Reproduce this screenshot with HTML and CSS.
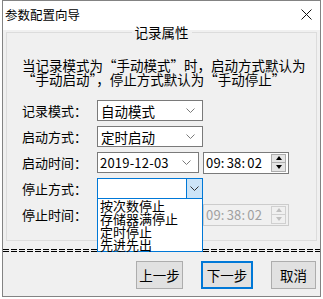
FILE: index.html
```html
<!DOCTYPE html>
<html lang="zh-CN">
<head>
    <meta charset="UTF-8">
    <title>参数配置向导</title>
    <link rel="stylesheet" href="styles.css">
</head>
<body>

<div class="window">
    <div class="titlebar">
        <span class="title">参数配置向导</span>
        <svg class="close" width="11" height="11" viewBox="0 0 11 11">
            <path d="M0.5 0.5L10.5 10.5M10.5 0.5L0.5 10.5" stroke="#111" stroke-width="1"/>
        </svg>
    </div>

    <div class="client">
        <fieldset class="group">
            <legend>记录属性</legend>
            <p class="intro">当记录模式为“手动模式”时，启动方式默认为<br>“手动启动”，停止方式默认为“手动停止”</p>

            <div class="rows">
                <div class="row">
                    <label>记录模式：</label>
                    <div class="combo">
                        <span>自动模式</span>
                        <svg class="chev" width="9" height="5" viewBox="0 0 9 5"><polyline points="0.5,0.5 4.5,4.5 8.5,0.5" fill="none" stroke="#7a7a7a"/></svg>
                    </div>
                </div>
                <div class="row">
                    <label>启动方式：</label>
                    <div class="combo">
                        <span>定时启动</span>
                        <svg class="chev" width="9" height="5" viewBox="0 0 9 5"><polyline points="0.5,0.5 4.5,4.5 8.5,0.5" fill="none" stroke="#7a7a7a"/></svg>
                    </div>
                </div>
                <div class="row">
                    <label>启动时间：</label>
                    <div class="combo date">
                        <span class="num">2019-12-03</span>
                        <svg class="chev" width="9" height="5" viewBox="0 0 9 5"><polyline points="0.5,0.5 4.5,4.5 8.5,0.5" fill="none" stroke="#7a7a7a"/></svg>
                    </div>
                    <div class="time">
                        <span class="num">09<span class="colon">:</span>38<span class="colon">:</span>02</span>
                        <div class="spin">
                            <div class="spin-btn"><span class="arrow-up"></span></div>
                            <div class="spin-btn"><span class="arrow-down"></span></div>
                        </div>
                    </div>
                </div>
                <div class="row">
                    <label>停止方式：</label>
                    <div class="combo focused">
                        <span></span>
                        <div class="drop-btn">
                            <svg width="9" height="5" viewBox="0 0 9 5"><polyline points="0.5,0.5 4.5,4.5 8.5,0.5" fill="none" stroke="#333"/></svg>
                        </div>
                        <ul class="dropdown">
                            <li>按次数停止</li>
                            <li>存储器满停止</li>
                            <li>定时停止</li>
                            <li>先进先出</li>
                        </ul>
                    </div>
                </div>
                <div class="row">
                    <label>停止时间：</label>
                    <div class="combo date">
                        <span class="num">2019-12-03</span>
                    </div>
                    <div class="time disabled">
                        <span class="num">09<span class="colon">:</span>38<span class="colon">:</span>02</span>
                        <div class="spin">
                            <div class="spin-btn"><span class="arrow-up"></span></div>
                            <div class="spin-btn"><span class="arrow-down"></span></div>
                        </div>
                    </div>
                </div>
            </div>
        </fieldset>

        <div class="separator"></div>

        <div class="buttons">
            <button class="btn btn-prev">上一步</button>
            <button class="btn btn-next">下一步</button>
            <button class="btn btn-cancel">取消</button>
        </div>
    </div>
</div>

</body>
</html>
```

FILE: styles.css
```css
* {
    box-sizing: border-box;
}
body {
    margin: 0;
    background-color: #fff;
    font-family: "Noto Sans CJK SC", "Microsoft YaHei", sans-serif;
    font-size: 13px;
    color: #000;
}
.window {
    margin-left: 2px;
    width: 319px;
    height: 297px;
    border: 1px solid #838383;
    background-color: #f0f0f0;
    display: flex;
    flex-direction: column;
}
.titlebar {
    flex: none;
    height: 29px;
    background-color: #fff;
    display: flex;
    align-items: center;
    justify-content: space-between;
    padding: 0 8px 3px 2px;
    font-size: 12.5px;
}
.client {
    flex: 1;
    display: flex;
    flex-direction: column;
}
.group {
    margin: -5px 3px 0 3px;
    padding: 0 15px 15px 15px;
    border: 1px solid #dcdcdc;
    min-width: 0;
}
.group legend {
    margin: 0 auto;
    padding: 0 3px;
    font-size: 13.5px;
    line-height: 14px;
}
.intro {
    margin: 20px 0 0 0;
    font-size: 13.5px;
    line-height: 13.5px;
    white-space: nowrap;
}
.rows {
    margin-top: 14px;
    display: flex;
    flex-direction: column;
    gap: 5px;
}
.row {
    height: 21px;
    display: flex;
    align-items: center;
}
.row label {
    flex: none;
    width: 75px;
}
.combo {
    position: relative;
    width: 106px;
    height: 21px;
    border: 1px solid #7a7a7a;
    background-color: #fff;
    display: flex;
    align-items: center;
    justify-content: space-between;
    padding: 0 7px 0 3px;
    font-size: 13.5px;
}
.combo.date {
    width: 102px;
    margin-right: 4px;
    padding-left: 2px;
}
.num {
    font-size: 13px;
    letter-spacing: 0.2px;
}
.colon {
    padding-right: 2px;
}
.combo.focused {
    border-color: #0078d7;
    padding-right: 0;
}
.drop-btn {
    width: 16px;
    height: 19px;
    background-color: #cce4f7;
    border-left: 1px solid #0078d7;
    display: flex;
    align-items: center;
    justify-content: center;
}
.dropdown {
    position: absolute;
    top: 100%;
    left: -1px;
    width: 106px;
    margin: 0;
    padding: 0 2px;
    list-style: none;
    background-color: #fff;
    border: 1px solid #0078d7;
    font-size: 13px;
    line-height: 13px;
    z-index: 5;
}
.time {
    width: 86px;
    height: 22px;
    border: 1px solid #7a7a7a;
    background-color: #fff;
    display: flex;
    align-items: center;
    justify-content: space-between;
    padding: 0 2px 0 2px;
}
.spin {
    width: 15px;
    height: 18px;
    border: 1px solid #adadad;
    display: flex;
    flex-direction: column;
}
.spin-btn {
    flex: 1;
    background-color: #e5e5e5;
    display: flex;
    align-items: center;
    justify-content: center;
}
.spin-btn + .spin-btn {
    border-top: 1px solid #adadad;
}
.arrow-up {
    border-left: 3px solid transparent;
    border-right: 3px solid transparent;
    border-bottom: 4px solid #000;
}
.arrow-down {
    border-left: 3px solid transparent;
    border-right: 3px solid transparent;
    border-top: 4px solid #000;
}
.time.disabled {
    border-color: #cccccc;
    background-color: #f0f0f0;
    color: #a0a0a0;
}
.time.disabled .spin {
    border-color: #d0d0d0;
}
.time.disabled .spin-btn {
    background-color: #f0f0f0;
}
.time.disabled .spin-btn + .spin-btn {
    border-top-color: #d0d0d0;
}
.time.disabled .arrow-up {
    border-bottom-color: #bfbfbf;
}
.time.disabled .arrow-down {
    border-top-color: #bfbfbf;
}
.separator {
    margin-top: 8px;
    height: 3px;
    background-image:
        repeating-linear-gradient(90deg, #000 0 6px, transparent 6px 8px),
        repeating-linear-gradient(90deg, #000 0 6px, transparent 6px 8px);
    background-size: 100% 1px, 100% 1px;
    background-position: top, bottom;
    background-repeat: no-repeat;
}
.buttons {
    margin-top: 9px;
    display: flex;
    justify-content: flex-end;
    gap: 18px;
    padding-right: 4px;
}
.btn {
    height: 28px;
    background-color: #e1e1e1;
    border: 1px solid #adadad;
    font-family: inherit;
    font-size: 13.5px;
    color: #000;
    padding: 0;
}
.btn-prev {
    width: 47px;
}
.btn-next {
    width: 52px;
    border: 2px solid #0078d7;
}
.btn-cancel {
    width: 45px;
}
```
